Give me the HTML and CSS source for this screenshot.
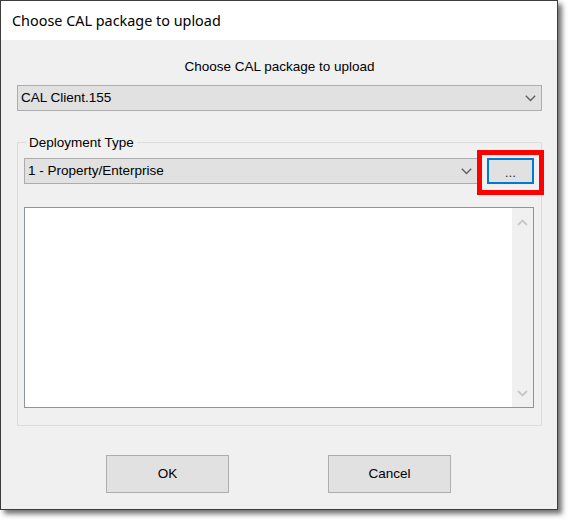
FILE: index.html
```html
<!DOCTYPE html>
<html>
<head>
<meta charset="utf-8">
<title>Choose CAL package to upload</title>
<link rel="stylesheet" href="styles.css">
</head>
<body>
<div class="window">
  <div class="titlebar">Choose CAL package to upload</div>
  <div class="content">
    <div class="heading">Choose CAL package to upload</div>
    <div class="combo combo-wide">
      <span class="combo-text">CAL Client.155</span>
      <svg class="chev" width="11" height="7" viewBox="0 0 11 7"><polyline points="0.8,0.8 5.5,5.5 10.2,0.8" fill="none" stroke="#606060" stroke-width="1.4"/></svg>
    </div>
    <fieldset class="group">
      <legend class="group-title">Deployment Type</legend>
      <div class="row">
        <div class="combo combo-fill">
          <span class="combo-text">1 - Property/Enterprise</span>
          <svg class="chev" width="11" height="7" viewBox="0 0 11 7"><polyline points="0.8,0.8 5.5,5.5 10.2,0.8" fill="none" stroke="#606060" stroke-width="1.4"/></svg>
        </div>
        <div class="browse-wrap">
          <div class="btn browse">...</div>
          <div class="highlight"></div>
        </div>
      </div>
      <div class="textbox">
        <div class="text-area"></div>
        <div class="vscroll">
          <div class="arrow"><svg width="11" height="7" viewBox="0 0 11 7"><polyline points="1,6 5.5,1.5 10,6" fill="none" stroke="#c8c8c8" stroke-width="1.8"/></svg></div>
          <div class="arrow"><svg width="11" height="7" viewBox="0 0 11 7"><polyline points="1,1 5.5,5.5 10,1" fill="none" stroke="#c8c8c8" stroke-width="1.8"/></svg></div>
        </div>
      </div>
    </fieldset>
    <div class="actions">
      <div class="btn action">OK</div>
      <div class="btn action">Cancel</div>
    </div>
  </div>
</div>
</body>
</html>
```

FILE: styles.css
```css
html, body {
  margin: 0;
  padding: 0;
  background: #ffffff;
}

body {
  width: 573px;
  height: 526px;
  overflow: hidden;
}

.window {
  width: 558px;
  height: 510px;
  box-sizing: border-box;
  border: 1px solid #3d3d3d;
  background: #f0f0f0;
  box-shadow: 4px 4px 5px rgba(0, 0, 0, 0.55);
  display: flex;
  flex-direction: column;
}

.titlebar {
  height: 39px;
  flex: none;
  background: #ffffff;
  padding-left: 11px;
  display: flex;
  align-items: center;
  font-family: "Noto Sans", "Liberation Sans", sans-serif;
  font-size: 14.4px;
  color: #000000;
}

.content {
  flex: 1;
  padding: 0 15px 0 16px;
  font-family: "Liberation Sans", Arial, sans-serif;
  font-size: 13.5px;
  color: #000000;
}

.heading {
  margin-top: 19px;
  line-height: 16px;
  text-align: center;
}

.combo {
  box-sizing: border-box;
  height: 26px;
  border: 1px solid #adadad;
  background: #e1e1e1;
  display: flex;
  align-items: center;
  padding: 0 5px 0 3px;
}

.combo-wide {
  margin-top: 10px;
}

.combo-text {
  flex: 1;
  line-height: 16px;
}

.chev {
  display: block;
  flex: none;
}

.group {
  margin: 23px 0 0 0;
  padding: 8px 7px 17px 6px;
  border: 1px solid #dcdcdc;
  min-width: 0;
}

.group-title {
  margin-left: 2px;
  padding: 0 3px;
  line-height: 16px;
  position: relative;
  top: 1px;
}

.row {
  display: flex;
  gap: 9px;
}

.combo-fill {
  flex: 1;
}

.browse-wrap {
  position: relative;
  flex: none;
}

.btn {
  box-sizing: border-box;
  border: 1px solid #adadad;
  background: #e1e1e1;
  display: flex;
  align-items: center;
  justify-content: center;
  line-height: 16px;
}

.browse {
  width: 47px;
  height: 26px;
  border: 2px solid #0078d7;
  color: #333333;
  padding-top: 3px;
}

.highlight {
  position: absolute;
  top: -8px;
  bottom: -11px;
  left: -10px;
  right: -10px;
  border: 5px solid #ff0000;
  pointer-events: none;
}

.textbox {
  margin-top: 23px;
  height: 201px;
  box-sizing: border-box;
  border: 1px solid #8f939a;
  background: #ffffff;
  display: flex;
}

.text-area {
  flex: 1;
}

.vscroll {
  width: 21px;
  background: #f0f0f0;
  display: flex;
  flex-direction: column;
  justify-content: space-between;
}

.arrow {
  height: 28px;
  display: flex;
  align-items: center;
  justify-content: center;
}

.arrow svg {
  display: block;
}

.actions {
  margin-top: 29px;
  margin-right: 2px;
  display: flex;
  justify-content: center;
  gap: 99px;
}

.action {
  width: 123px;
  height: 38px;
}
```
